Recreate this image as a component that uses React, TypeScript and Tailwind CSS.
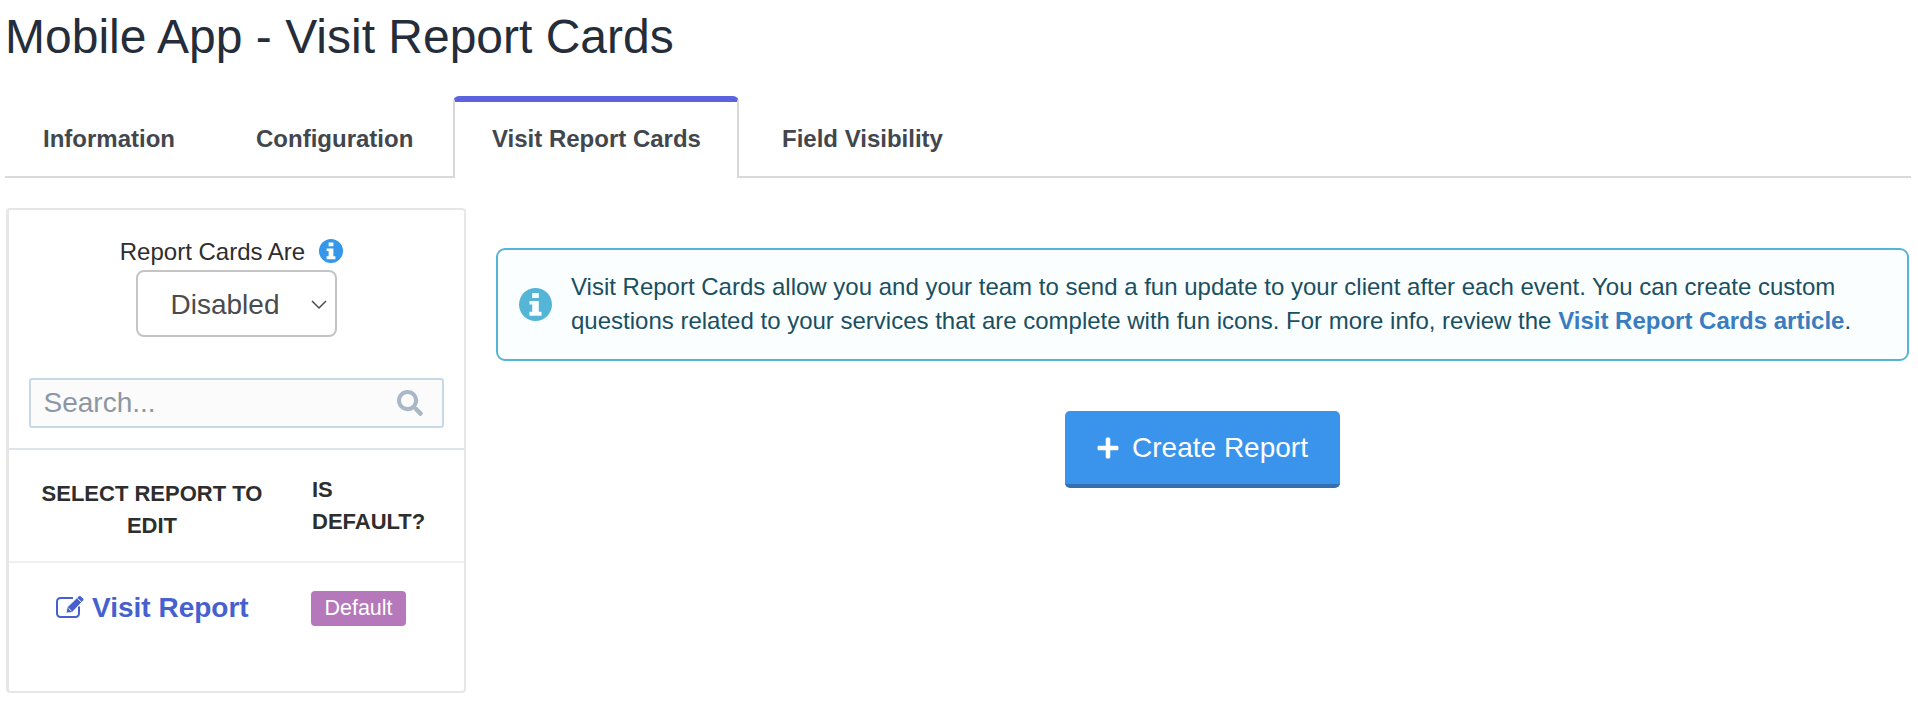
import React from "react";
import { FaPlus, FaSearch } from "react-icons/fa";

function InfoIcon({ className }: { className: string }) {
  return (
    <svg className={className} viewBox="0 0 24 24" fill="currentColor">
      <path
        fillRule="evenodd"
        d="M12 0a12 12 0 1 1 0 24 12 12 0 0 1 0-24zM9.600 3.600v3.600h4.800V3.600zM7.600 9.400v2.600h2v5.200h-2v3h8.800v-3h-2V9.400z"
      />
    </svg>
  );
}

function EditIcon() {
  return (
    <svg className="mt-[6px] mr-[8px] shrink-0" width="28" height="23" viewBox="0 0 28 23" fill="none">
      <path d="M17 3H4.500A3.500 3.500 0 0 0 1 6.500V18.500A3.500 3.500 0 0 0 4.500 22H19.500A3.500 3.500 0 0 0 23 18.500V11.500" stroke="currentColor" strokeWidth="2" />
      <path d="M10 18l1.200-5.800L22.800 1q1-.9 2 0l2.600 2.400q1 1 0 2L16 17.500z" fill="currentColor" stroke="white" strokeWidth="0.800" />
      <path d="M12.500 13.300l3 2.800M21.500 3.500l4 3.700" stroke="white" strokeWidth="1" />
    </svg>
  );
}

export default function App() {
  return (
    <div className="w-[1918px] h-[711px] bg-white overflow-hidden font-['Liberation_Sans',sans-serif] pl-[5px] pr-[7px]">
      <h1 className="text-[48px] leading-[52px] text-[#252d3a] pt-[11px] h-[96px]">Mobile App - Visit Report Cards</h1>
      <div className="flex h-[82px] border-b-2 border-[#d9d9d9] text-[#42464d] text-[24px] font-bold">
        <div className="w-[212px] pt-[25px] pl-[38px]">Information</div>
        <div className="w-[236px] pt-[25px] pl-[39px]">Configuration</div>
        <div className="w-[286px] h-[82px] border-x-2 border-[#d9d9d9] border-t-[6px] border-t-[#5b64de] rounded-t-[6px] bg-white text-center pt-[19px] pl-[1px]">Visit Report Cards</div>
        <div className="pt-[25px] pl-[43px]">Field Visibility</div>
      </div>
      <div className="flex pt-[30px]">
        <aside className="w-[460px] h-[485px] ml-[1px] border-2 border-l-[3px] border-[#e6e6e6] rounded-[4px] flex flex-col shrink-0">
          <div className="flex flex-col items-center pt-[29px] h-[240px] border-b-2 border-[#dfe3ec]">
            <div className="flex items-center text-[24px] leading-[26px] text-[#2e2e2e] mr-[10px]">
              <span>Report Cards Are</span>
              <InfoIcon className="ml-[14px] text-[#3497ea] w-[24px] h-[24px] mt-[-3px]" />
            </div>
            <div className="w-[201px] h-[67px] mt-[5px] border-2 border-[#c4c4c4] rounded-[8px] flex items-center relative text-[28px] text-[#4b4b4b] pl-[33px] mr-[1px]">
              <span className="mt-[3px]">Disabled</span>
              <svg className="absolute right-[7px] top-[27px]" width="18" height="12" viewBox="0 0 18 12" fill="none" stroke="#4b4b4b" strokeWidth="1.5"><path d="M2 2l7 7 7-7" /></svg>
            </div>
            <div className="w-[415px] h-[50px] mt-[41px] border-2 border-[#c9d8e8] rounded-[3px] bg-[#fbfbfb] flex items-center justify-between pl-[13px] pr-[19px] text-[28px] text-[#8d97a3] mr-[1px]">
              <span>Search...</span>
              <FaSearch className="text-[#a9b7c6] text-[26px]" />
            </div>
          </div>
          <div className="flex h-[113px] border-b-2 border-[#eceff5] font-bold text-[22px] leading-[32px] text-[#2e2e2e]">
            <div className="w-[302px] pl-[20px] pr-[36px] text-center pt-[28px]">SELECT REPORT TO EDIT</div>
            <div className="pt-[24px] pl-[1px]">IS<br />DEFAULT?</div>
          </div>
          <div className="flex flex-1">
            <div className="w-[302px] flex items-start pl-[47px] pt-[26px] text-[#4661cf] text-[28px] leading-[38px] font-bold">
              <EditIcon />
              <span>Visit Report</span>
            </div>
            <div className="pt-[28px]">
              <span className="flex items-center justify-center w-[95px] h-[35px] bg-[#b578bb] rounded-[4px] text-white text-[21.5px]">Default</span>
            </div>
          </div>
        </aside>
        <main className="flex-1 ml-[30px] pt-[40px]">
          <div className="h-[113px] w-[1413px] border-2 border-[#55b5d6] rounded-[9px] bg-[#fafeff] flex items-center text-[#1a4f60] text-[24px] leading-[34px]">
            <InfoIcon className="text-[#55b5d6] w-[33px] h-[33px] ml-[21px] mr-[19px] shrink-0" />
            <p className="mb-[2px]">Visit Report Cards allow you and your team to send a fun update to your client after each event. You can create custom<br />questions related to your services that are complete with fun icons. For more info, review the <b className="text-[#3a7cc0]">Visit Report Cards article</b>.</p>
          </div>
          <div className="flex justify-center mt-[50px]">
            <button className="w-[275px] h-[77px] mr-[3px] bg-[#3a94ec] border-b-[4px] border-[#3570ae] rounded-[5px] text-white text-[28px] flex items-center justify-center gap-[12px]">
              <FaPlus className="text-[24px]" />
              Create Report
            </button>
          </div>
        </main>
      </div>
    </div>
  );
}
